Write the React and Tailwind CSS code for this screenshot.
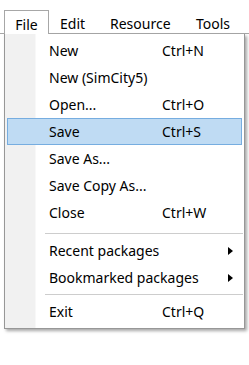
import React from "react";

const font = { fontFamily: '"Noto Sans", "Open Sans", sans-serif' };

function Item({ label, shortcut, arrow, active }) {
  return (
    <div
      className={
        "h-[27px] mx-[2px] flex items-center relative " +
        (active ? "bg-[#bfdbf3] border border-[#76ade0]" : "border border-transparent")
      }
    >
      <span className="absolute left-[41px] text-[14px] text-black leading-none">{label}</span>
      {shortcut && (
        <span className="absolute left-[154px] text-[14px] text-black leading-none">{shortcut}</span>
      )}
      {arrow && (
        <svg className="absolute left-[220px]" width="5" height="8" viewBox="0 0 5 8">
          <path d="M0 0 L5 4 L0 8 Z" fill="#000" />
        </svg>
      )}
    </div>
  );
}

function Sep({ cls }) {
  return (
    <div className={cls}>
      <div className="ml-[40px] mr-[1px] h-px bg-[#cdcdcd]" />
    </div>
  );
}

export default function App() {
  return (
    <div className="w-[249px] h-[365px] bg-white relative overflow-hidden" style={font}>
      {/* menu bar */}
      <div className="mt-[10px] h-[24px] border-b border-[#a7a7a7] flex items-stretch text-[14px] text-black">
        <div className="ml-[4px] w-[45px] h-[24px] pt-[3px] border-l border-t border-r border-[#a7a7a7] bg-white flex items-center justify-center relative z-10">
          File
        </div>
        <div className="w-[49px] pl-[11px] pt-[3px] flex items-center">Edit</div>
        <div className="w-[86px] pl-[12px] pt-[3px] flex items-center">Resource</div>
        <div className="pl-[12px] pt-[3px] flex items-center">Tools</div>
      </div>

      {/* dropdown */}
      <div
        className="absolute left-[4px] top-[34px] w-[241px] border-l border-r border-b border-[#979797] pt-[3px] pb-[3px] shadow-[2px_2px_3px_rgba(0,0,0,0.35)] bg-[linear-gradient(to_right,#f1f1f1_30px,#ffffff_31px)]"
      >
        <Item label="New" shortcut="Ctrl+N" />
        <Item label="New (SimCity5)" />
        <Item label="Open..." shortcut="Ctrl+O" />
        <Item label="Save" shortcut="Ctrl+S" active />
        <Item label="Save As..." />
        <Item label="Save Copy As..." />
        <Item label="Close" shortcut="Ctrl+W" />
        <Sep cls="h-[11px] pt-[7px]" />
        <Item label="Recent packages" arrow />
        <Item label="Bookmarked packages" arrow />
        <Sep cls="h-[7px] pt-[3px]" />
        <Item label="Exit" shortcut="Ctrl+Q" />
      </div>
    </div>
  );
}
